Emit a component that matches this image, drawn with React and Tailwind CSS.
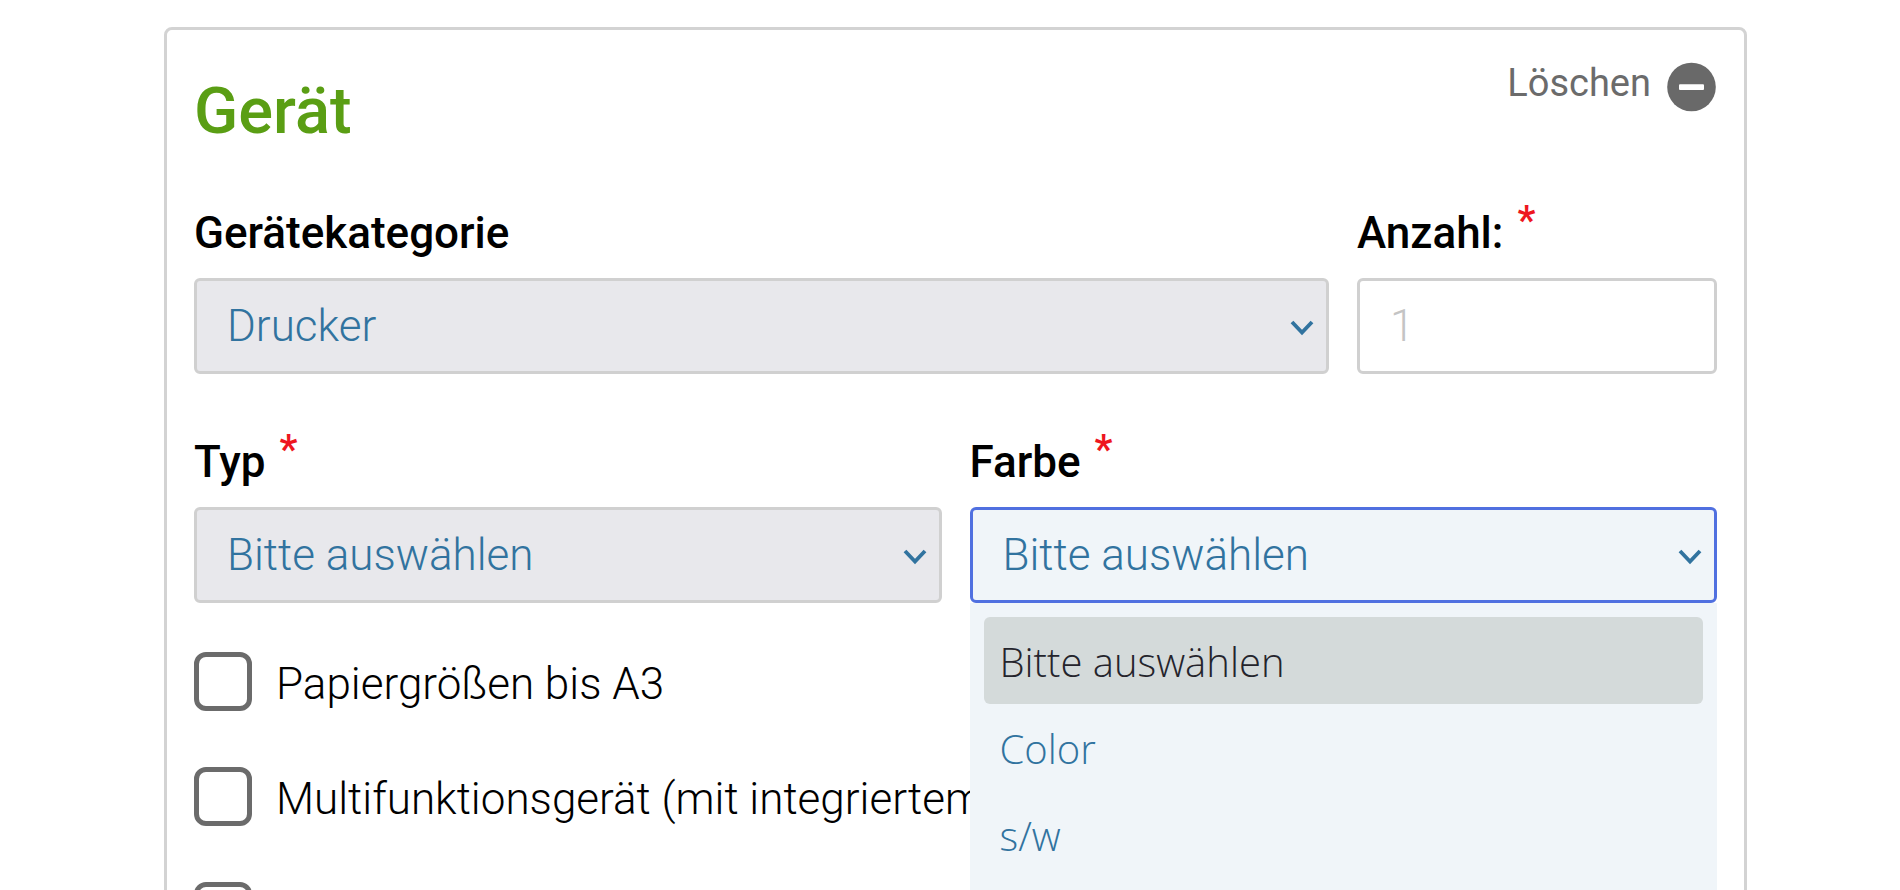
import { useState } from "react";

function Chevron() {
  return (
    <svg
      className="pointer-events-none absolute right-3 top-1/2 h-6 w-7 -translate-y-1/2"
      viewBox="0 0 28 24"
      fill="none"
      stroke="#31739f"
      strokeWidth="3.8"
      aria-hidden="true"
    >
      <path d="M3 8 L13 18.5 L23 8" />
    </svg>
  );
}

function FieldLabel({ htmlFor, required, children }) {
  return (
    <label
      htmlFor={htmlFor}
      className="flex h-14 items-center gap-3.5 text-[44px] leading-[56px] font-medium text-black"
    >
      {children}
      {required && <span className="h-20 text-[40px] leading-[56px] font-semibold text-[#ee1620]">*</span>}
    </label>
  );
}

const FIELD =
  "block h-24 w-full appearance-none rounded-md border-3 px-[30px] text-[44px] font-light outline-none";

function SelectField({ id, label, required, options, active, children }) {
  return (
    <div className="relative flex min-w-0 flex-1 flex-col gap-[17px]">
      <FieldLabel htmlFor={id} required={required}>
        {label}
      </FieldLabel>
      <div className="relative">
        <select
          id={id}
          className={
            FIELD +
            (active
              ? " border-[#5070e0] bg-[#f0f5f9] text-[#31739f]"
              : " border-[#d0d0d0] bg-[#e8e8ec] text-[#31739f]")
          }
        >
          {options.map((o) => (
            <option key={o}>{o}</option>
          ))}
        </select>
        <Chevron />
        {children}
      </div>
    </div>
  );
}

function CheckRow({ id, label, ariaLabel }) {
  return (
    <div className="flex h-[59px] items-center gap-6">
      <input
        id={id}
        type="checkbox"
        aria-label={ariaLabel}
        className="h-[59px] w-[58px] shrink-0 appearance-none rounded-xl border-5 border-[#6b6b6b] bg-white checked:bg-[#6b6b6b]"
      />
      {label && (
        <label htmlFor={id} className="pt-1 text-[44px] leading-[56px] font-light whitespace-nowrap text-black">
          {label}
        </label>
      )}
    </div>
  );
}

const COLORS = ["Bitte auswählen", "Color", "s/w"];

export default function App() {
  const [color, setColor] = useState(COLORS[0]);
  return (
    <main className="h-screen overflow-hidden bg-white pt-[27px] pr-[153px] pl-[164px] font-['Roboto',sans-serif]">
      <section className="min-h-screen rounded-lg border-3 border-[#d3d3d3] px-[27px] pb-12">
        <header className="flex h-[118px] items-start justify-between">
          <h1 className="pt-[45px] text-[65px] leading-[72px] font-medium text-[#5a9e14]">Gerät</h1>
          <button type="button" className="flex items-center gap-4 pt-[31px] text-[#6b6b6b]">
            <span className="pb-2 text-[38px] leading-[44px]">Löschen</span>
            <svg className="h-[50px] w-[50px]" viewBox="0 0 50 50" aria-hidden="true">
              <circle cx="24.5" cy="25" r="24.3" fill="#696969" />
              <rect x="12" y="22.3" width="25" height="5.6" rx="1" fill="#fff" />
            </svg>
          </button>
        </header>

        <div className="mt-[57px] flex gap-7">
          <SelectField id="kategorie" label="Gerätekategorie" options={["Drucker"]} />
          <div className="flex w-[360px] flex-col gap-[17px]">
            <FieldLabel htmlFor="anzahl" required>
              Anzahl:
            </FieldLabel>
            <input
              id="anzahl"
              type="text"
              inputMode="numeric"
              placeholder="1"
              className={FIELD + " border-[#d0d0d0] bg-white text-black placeholder:text-[#c4c4c4]"}
            />
          </div>
        </div>

        <div className="mt-15 flex gap-7">
          <SelectField id="typ" label="Typ" required options={["Bitte auswählen"]} />
          <SelectField id="farbe" label="Farbe" required options={[color]} active>
            <ul
              role="listbox"
              aria-label="Farbe"
              className="absolute inset-x-0 top-full z-10 h-[400px] bg-[#f0f5f9] p-3.5 font-['Open_Sans',sans-serif]"
            >
              {COLORS.map((c) => (
                <li
                  key={c}
                  role="option"
                  aria-selected={c === color}
                  onClick={() => setColor(c)}
                  className={
                    "h-[87px] rounded-md px-4 text-[40px] leading-[89px] font-light " +
                    (c === color ? "bg-[#d4dada] text-[#24242c]" : "text-[#31739f]")
                  }
                >
                  {c}
                </li>
              ))}
            </ul>
          </SelectField>
        </div>

        <div className="mt-[49px] flex flex-col gap-14">
          <CheckRow id="a3" label="Papiergrößen bis A3" />
          <CheckRow id="mfp" label="Multifunktionsgerät (mit integriertem" />
          <CheckRow id="weitere" ariaLabel="Weitere Option" />
        </div>
      </section>
    </main>
  );
}
